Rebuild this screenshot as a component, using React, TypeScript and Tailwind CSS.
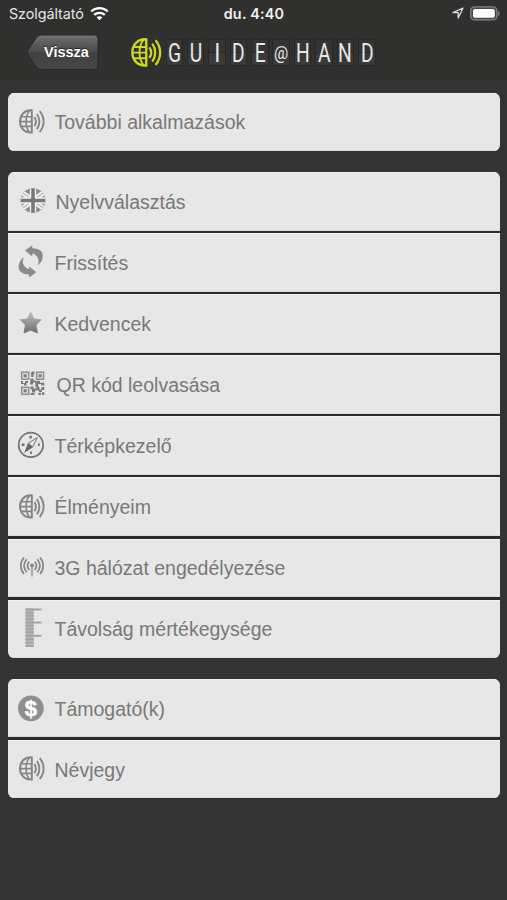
import type { ReactNode } from 'react';

const G = '#8a8a8a';

function GlobeShape() {
  return (
    <g fill="none" stroke="currentColor">
      <path strokeWidth="2" d="M15.800 9.800C8.600 9.200 4 14.600 4 21s4.600 11.600 11.800 11z" />
      <path strokeWidth="1.600" d="M13.600 10C8.900 15.500 8.900 26.500 13.600 32M5.400 16.300h10.400M5.400 25.900h10.400M4 21.100h11.800" />
      <path strokeWidth="1.900" d="M18.400 16.600c1.900 2.700 1.900 6.300 0 9M20.900 13.500c3.300 4.500 3.300 10.700 0 15.200M23.700 10.600c5.200 6.200 5.200 14.800 0 21" />
    </g>
  );
}

function Icon({ children }: { children: ReactNode }) {
  return (
    <svg className="ml-2 h-11 w-[30px] shrink-0 text-[#858585]" viewBox="0 0 30 44">
      {children}
    </svg>
  );
}

const Globe = () => (
  <Icon>
    <g transform="translate(0 .5)">
      <GlobeShape />
    </g>
  </Icon>
);

const Flag = () => (
  <Icon>
    <defs>
      <clipPath id="disc"><circle cx="17" cy="21.500" r="12.300" /></clipPath>
    </defs>
    <g clipPath="url(#disc)">
      <rect x="4" y="8" width="26" height="27" fill="#8c8c8c" />
      <path d="M4 11.800L30 31.300M4 31.300L30 11.800" stroke="#f2f2f2" strokeWidth="5" />
      <path d="M4 11.800L30 31.300M4 31.300L30 11.800" stroke="#b5b5b5" strokeWidth="1.200" />
      <path d="M17 8v27M4 21.500h26" stroke="#f2f2f2" strokeWidth="6.400" />
      <path d="M17 8v27M4 21.500h26" stroke="#777" strokeWidth="3.600" />
    </g>
  </Icon>
);

const REFRESH_ARROW =
  'M9 10.600L16.300 5.200V8.200C22.800 8.200 26.800 11 26.800 15.700C26.800 19.600 25 23 21.700 25.500C22.700 22.500 23 19.900 21.600 17.700C20.400 15.600 18.700 14 16.300 13.600V16.400Z';

const Refresh = () => (
  <Icon>
    <path fill={G} d={REFRESH_ARROW} />
    <path fill={G} d={REFRESH_ARROW} transform="rotate(180 14.700 21.400)" />
  </Icon>
);

const Star = () => (
  <Icon>
    <defs>
      <linearGradient id="star" x2="0" y2="1">
        <stop stopColor="#bcbcbc" />
        <stop offset="1" stopColor="#707070" />
      </linearGradient>
    </defs>
    <path
      fill="url(#star)"
      stroke="url(#star)"
      strokeLinejoin="round"
      d="M14.700 11.200l3.200 6.800 7.200.800-5.200 5.200 1.500 7.900-6.700-2.900-6.700 2.900 1.500-7.900-5.200-5.200 7.200-.800z"
    />
  </Icon>
);

const Qr = () => (
  <Icon>
    <g fill="#dedede" stroke="#8f8f8f" strokeWidth="1.500">
      <rect x="5.700" y="9.200" width="7" height="7" />
      <rect x="20.600" y="9.200" width="7" height="7" />
      <rect x="5.700" y="24.300" width="7" height="7" />
    </g>
    <path
      fill="#7b7b7b"
      d="M7.700 11.200h3v3h-3zM22.600 11.200h3v3h-3zM7.700 26.300h3v3h-3zM16 8.500h2.500v2.500h-1v3h-2.300v-3h-.700zM14.500 15.500h3v2h2.500v2h-3v2h-3zM5 18h2v2h2v-2h3v2h-1.500v2.500H8V21H5zM21 17.800h3v2h4.300v2.600h-3V21h-3v3h-3v-4zM14.500 23.500h3v2h3v-1.500h3v2.500h2V24h2.800v3H26v2h-3v-1.500h-4v2h-3v-3h-1.500zM14.500 30h4v2h-4zM22.500 29.800h2.500V32h-2.500zM26 29.300h2.300V32H26z"
    />
  </Icon>
);

const Compass = () => (
  <Icon>
    <circle cx="14.900" cy="20.900" r="12.200" fill="none" stroke="#727272" strokeWidth="1.700" />
    <path fill="#727272" d="M13.400 11.800h2.400v2.600h-2.400zM14 27.500h1.900v2.500H14zM5.700 19.600h2.800v2.400H5.700zM21.900 19.600h1.800v2.400h-1.800z" />
    <path fill="none" stroke="#727272" strokeWidth="1" d="M21.300 13.600L12.300 19.200L16.600 23Z" />
    <path fill="#666" d="M8.200 29L12 18.900L16.900 23.200Z" />
  </Icon>
);

const Antenna = () => (
  <Icon>
    <path fill="none" stroke="#b0b0b0" strokeWidth="2.200" d="M16 20.500v10" />
    <circle cx="16" cy="19.500" r="2" fill="#858585" />
    <path
      fill="none"
      stroke="#858585"
      strokeWidth="1.700"
      d="M13.200 15.400c-2 2.600-2 6 0 8.600M18.800 15.400c2 2.600 2 6 0 8.600M10.700 13.200c-3.200 4-3.200 9 0 13M21.300 13.200c3.200 4 3.200 9 0 13M8 11.500c-4.200 4.800-4.200 11.600 0 16.400M24 11.500c4.200 4.800 4.200 11.600 0 16.400"
    />
  </Icon>
);

const Ruler = () => (
  <Icon>
    <path fill="#b9b9b9" d="M9.500 1.300h8.200v38.700H9.500z" />
    <path
      stroke="#a3a3a3"
      strokeWidth="1.900"
      d="M9.500 2.500h16M9.500 5.700h8.200M9.500 8.900h8.200M9.500 12.200h8.200M9.500 15.500h16M9.500 18.700h8.200M9.500 21.900h8.200M9.500 25.200h8.200M9.500 28.800h16M9.500 32.300h8.200M9.500 35.600h8.200M9.500 38.900h8.200"
    />
  </Icon>
);

const Dollar = () => (
  <Icon>
    <circle cx="14.900" cy="22.300" r="12.900" fill="#8f8f8f" />
    <text x="14.900" y="29.800" textAnchor="middle" className="font-['Liberation_Sans',sans-serif] text-[22px] font-bold" fill="#fff" stroke="#fff" strokeWidth=".5">
      $
    </text>
  </Icon>
);

type Item = { label: string; icon: ReactNode; pad?: string };

const groups: Item[][] = [
  [{ label: 'További alkalmazások', icon: <Globe /> }],
  [
    { label: 'Nyelvválasztás', icon: <Flag />, pad: 'pl-[9.500px]' },
    { label: 'Frissítés', icon: <Refresh /> },
    { label: 'Kedvencek', icon: <Star /> },
    { label: 'QR kód leolvasása', icon: <Qr />, pad: 'pl-[10.500px]' },
    { label: 'Térképkezelő', icon: <Compass /> },
    { label: 'Élményeim', icon: <Globe /> },
    { label: '3G hálózat engedélyezése', icon: <Antenna /> },
    { label: 'Távolság mértékegysége', icon: <Ruler /> },
  ],
  [
    { label: 'Támogató(k)', icon: <Dollar /> },
    { label: 'Névjegy', icon: <Globe /> },
  ],
];

function StatusBar() {
  return (
    <div className="grid h-7 grid-cols-3 items-center pl-[9px] pr-[6px] text-white">
      <div className="flex items-center gap-[6px]">
        <span className="whitespace-nowrap font-[Inter,sans-serif] text-[14.300px] leading-7 tracking-[-0.050px] text-[#e6e6e6]">Szolgáltató</span>
        <svg className="h-[14px] w-[19px] shrink-0" viewBox="0 0 19 14">
          <g fill="none" stroke="#fff" strokeWidth="2.300">
            <path d="M1.200 4.500c4.700-4.400 11.900-4.400 16.600 0" />
            <path d="M4.200 7.900c3-2.800 7.600-2.800 10.600 0" />
          </g>
          <path fill="#fff" d="M6.500 10.300c1.700-1.500 4.300-1.500 6 0l-3 3z" />
        </svg>
      </div>
      <div className="pr-[2px] text-center font-[Inter,sans-serif] text-[14.300px] font-semibold leading-[26px] tracking-[0.250px] text-[#f2f2f2]">du. 4:40</div>
      <div className="flex items-center justify-end gap-[6px] pb-[2px]">
        <svg className="h-3 w-3" viewBox="0 0 12 12">
          <path d="M11 1L1 5.700h5.200V11z" fill="none" stroke="#ddd" strokeWidth="1.300" strokeLinejoin="round" />
        </svg>
        <svg className="h-[15px] w-[31px]" viewBox="0 0 31 15">
          <rect x=".7" y=".9" width="26.200" height="13" rx="4" fill="#464646" stroke="#858585" strokeWidth="1.300" />
          <rect x="3" y="3.100" width="21.800" height="8.700" rx="1.800" fill="#fff" />
          <path fill="#858585" d="M28.200 5c2 .800 2 4.200 0 5z" />
        </svg>
      </div>
    </div>
  );
}

function BackButton() {
  return (
    <button className="grid h-9 w-[73px] grid-cols-1 grid-rows-1">
      <svg className="col-start-1 row-start-1 h-9 w-[73px]" viewBox="0 0 73 36">
        <defs>
          <linearGradient id="back" x2="0" y2="1">
            <stop stopColor="#777" />
            <stop offset=".12" stopColor="#666" />
            <stop offset=".48" stopColor="#4b4b4b" />
            <stop offset=".5" stopColor="#404040" />
            <stop offset="1" stopColor="#484848" />
          </linearGradient>
        </defs>
        <path
          d="M15.500 1H67.500Q72 1 72 5.500V31Q72 35.500 67.500 35.500H15.500Q12.500 35.500 10.500 33L2 20.500Q.5 18 2 15.800L10.500 3.600Q12.500 1 15.500 1Z"
          fill="url(#back)"
          stroke="#272727"
        />
      </svg>
      <span className="col-start-1 row-start-1 self-center pl-[18px] text-left font-['Liberation_Sans',sans-serif] text-[14.500px] font-bold leading-5 text-white [text-shadow:0_-1px_1px_#222]">
        Vissza
      </span>
    </button>
  );
}

function Logo() {
  return (
    <div className="flex items-center">
      <svg className="h-[33px] w-[35px] text-[#cfd91f]" viewBox="2 7 28 28">
        <GlobeShape />
      </svg>
      <div className="flex gap-[3.900px] pl-[1.500px]">
        {'GUIDE@HAND'.split('').map((c, i) => (
          <span
            key={i}
            className="flex h-[27px] w-[17.500px] items-center justify-center border border-[#282828] bg-[linear-gradient(#343434_48%,#282828_48%,#282828_52%,#3a3a3a_52%)] pt-[3px] font-[Roboto,sans-serif] text-[25px] leading-none text-[#e8e8e8]"
          >
            <span className={c === '@' ? 'scale-x-[.88] pb-[2px] text-[18px]' : c === 'I' ? 'scale-x-[.9]' : 'scale-x-[.77]'}>{c}</span>
          </span>
        ))}
      </div>
    </div>
  );
}

export default function App() {
  return (
    <div className="flex h-[900px] w-[507px] flex-col overflow-hidden bg-[#333]">
      <header className="h-20 bg-[#30302f]">
        <StatusBar />
        <div className="flex h-12 items-center pl-[26px]">
          <BackButton />
          <div className="ml-[30px]">
            <Logo />
          </div>
        </div>
      </header>
      <main className="flex flex-col gap-[20.500px] pl-2 pr-[7.500px] pt-[12.900px]">
        {groups.map((items, g) => (
          <ul key={g} className="flex flex-col gap-[2.500px] overflow-hidden rounded-[6px] bg-[#2a2b2a]">
            {items.map((it, i) => (
              <li key={it.label} className="flex h-[58.600px] items-center border-b border-t border-b-[#dadada] border-t-[#f3f3f3] bg-[#e7e7e7]">
                {it.icon}
                <span className={`${it.pad ?? 'pl-[8.500px]'} ${g === 0 && i === 0 ? '' : 'pt-px'} font-['Liberation_Sans',sans-serif] text-[19.500px] leading-6 text-[#787878]`}>
                  {it.label}
                </span>
              </li>
            ))}
          </ul>
        ))}
      </main>
    </div>
  );
}
